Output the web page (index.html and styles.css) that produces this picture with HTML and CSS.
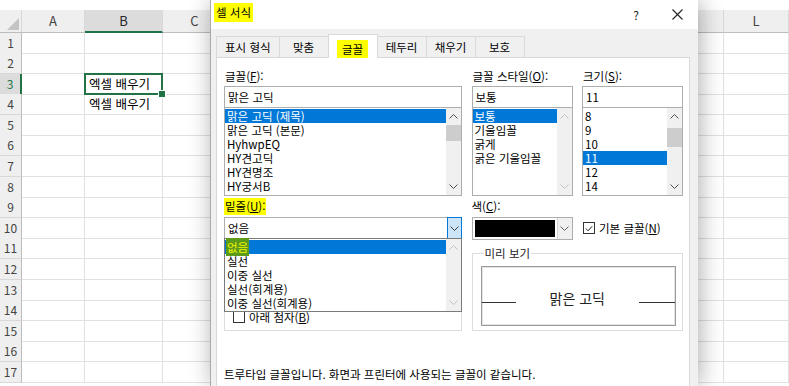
FILE: index.html
```html
<!DOCTYPE html>
<html lang="ko">
<head>
    <meta charset="UTF-8">
    <title>셀 서식</title>
    <link rel="stylesheet" href="styles.css">
</head>
<body>
    <div class="sheet">
        <div class="row head">
            <div class="corner"><svg width="12" height="12" viewBox="0 0 12 12"><polygon points="12,0 12,12 0,12" fill="#c4c4c4"/></svg></div>
            <div>A</div><div class="on">B</div><div>C</div><div></div><div></div><div>L</div>
        </div>
        <div class="row"><div class="rh">1</div><div class="cell"></div><div class="cell"></div><div class="cell"></div><div class="cell"></div><div class="cell"></div><div class="cell"></div></div>
        <div class="row"><div class="rh">2</div><div class="cell"></div><div class="cell"></div><div class="cell"></div><div class="cell"></div><div class="cell"></div><div class="cell"></div></div>
        <div class="row"><div class="rh on">3</div><div class="cell"></div><div class="cell active">엑셀 배우기</div><div class="cell"></div><div class="cell"></div><div class="cell"></div><div class="cell"></div></div>
        <div class="row"><div class="rh">4</div><div class="cell"></div><div class="cell">엑셀 배우기</div><div class="cell"></div><div class="cell"></div><div class="cell"></div><div class="cell"></div></div>
        <div class="row"><div class="rh">5</div><div class="cell"></div><div class="cell"></div><div class="cell"></div><div class="cell"></div><div class="cell"></div><div class="cell"></div></div>
        <div class="row"><div class="rh">6</div><div class="cell"></div><div class="cell"></div><div class="cell"></div><div class="cell"></div><div class="cell"></div><div class="cell"></div></div>
        <div class="row"><div class="rh">7</div><div class="cell"></div><div class="cell"></div><div class="cell"></div><div class="cell"></div><div class="cell"></div><div class="cell"></div></div>
        <div class="row"><div class="rh">8</div><div class="cell"></div><div class="cell"></div><div class="cell"></div><div class="cell"></div><div class="cell"></div><div class="cell"></div></div>
        <div class="row"><div class="rh">9</div><div class="cell"></div><div class="cell"></div><div class="cell"></div><div class="cell"></div><div class="cell"></div><div class="cell"></div></div>
        <div class="row"><div class="rh">10</div><div class="cell"></div><div class="cell"></div><div class="cell"></div><div class="cell"></div><div class="cell"></div><div class="cell"></div></div>
        <div class="row"><div class="rh">11</div><div class="cell"></div><div class="cell"></div><div class="cell"></div><div class="cell"></div><div class="cell"></div><div class="cell"></div></div>
        <div class="row"><div class="rh">12</div><div class="cell"></div><div class="cell"></div><div class="cell"></div><div class="cell"></div><div class="cell"></div><div class="cell"></div></div>
        <div class="row"><div class="rh">13</div><div class="cell"></div><div class="cell"></div><div class="cell"></div><div class="cell"></div><div class="cell"></div><div class="cell"></div></div>
        <div class="row"><div class="rh">14</div><div class="cell"></div><div class="cell"></div><div class="cell"></div><div class="cell"></div><div class="cell"></div><div class="cell"></div></div>
        <div class="row"><div class="rh">15</div><div class="cell"></div><div class="cell"></div><div class="cell"></div><div class="cell"></div><div class="cell"></div><div class="cell"></div></div>
        <div class="row"><div class="rh">16</div><div class="cell"></div><div class="cell"></div><div class="cell"></div><div class="cell"></div><div class="cell"></div><div class="cell"></div></div>
        <div class="row"><div class="rh">17</div><div class="cell"></div><div class="cell"></div><div class="cell"></div><div class="cell"></div><div class="cell"></div><div class="cell"></div></div>
    </div>

    <div class="dialog">
        <div class="titlebar">
            <span class="title mark">셀 서식</span>
            <div class="ctrls">
                <span class="ctrl">?</span>
                <span class="ctrl"><svg width="11" height="11" viewBox="0 0 11 11"><path d="M.5.5l10 10M10.5.5l-10 10" stroke="#222" stroke-width="1.1"/></svg></span>
            </div>
        </div>

        <div class="dlg-body">
            <div class="tabs">
                <div class="tab">표시 형식</div>
                <div class="tab">맞춤</div>
                <div class="tab active"><span class="mark">글꼴</span></div>
                <div class="tab">테두리</div>
                <div class="tab">채우기</div>
                <div class="tab">보호</div>
            </div>

            <div class="panel">
                <div class="font-grid">
                    <div class="lbl">글꼴(<u>F</u>):</div>
                    <div class="lbl">글꼴 스타일(<u>O</u>):</div>
                    <div class="lbl">크기(<u>S</u>):</div>

                    <div class="field">맑은 고딕</div>
                    <div class="field">보통</div>
                    <div class="field">11</div>

                    <div class="list">
                        <div class="items">
                            <div class="item on">맑은 고딕 (제목)</div>
                            <div class="item">맑은 고딕 (본문)</div>
                            <div class="item">HyhwpEQ</div>
                            <div class="item">HY견고딕</div>
                            <div class="item">HY견명조</div>
                            <div class="item">HY궁서B</div>
                        </div>
                        <div class="sb">
                            <span class="arr"><svg width="9" height="5" viewBox="0 0 9 5"><path d="M.5 4.5l4-4 4 4" fill="none" stroke="#505050"/></svg></span>
                            <span class="thumb"></span>
                            <span class="fill"></span>
                            <span class="arr"><svg width="9" height="5" viewBox="0 0 9 5"><path d="M.5.5l4 4 4-4" fill="none" stroke="#505050"/></svg></span>
                        </div>
                    </div>
                    <div class="list">
                        <div class="items">
                            <div class="item on">보통</div>
                            <div class="item">기울임꼴</div>
                            <div class="item">굵게</div>
                            <div class="item">굵은 기울임꼴</div>
                        </div>
                        <div class="sb off">
                            <span class="arr"><svg width="9" height="5" viewBox="0 0 9 5"><path d="M.5 4.5l4-4 4 4" fill="none" stroke="#c2c2c2"/></svg></span>
                            <span class="fill"></span>
                            <span class="arr"><svg width="9" height="5" viewBox="0 0 9 5"><path d="M.5.5l4 4 4-4" fill="none" stroke="#c2c2c2"/></svg></span>
                        </div>
                    </div>
                    <div class="list">
                        <div class="items">
                            <div class="item">8</div>
                            <div class="item">9</div>
                            <div class="item">10</div>
                            <div class="item on">11</div>
                            <div class="item">12</div>
                            <div class="item">14</div>
                        </div>
                        <div class="sb">
                            <span class="arr"><svg width="9" height="5" viewBox="0 0 9 5"><path d="M.5 4.5l4-4 4 4" fill="none" stroke="#505050"/></svg></span>
                            <span class="thumb low"></span>
                            <span class="fill"></span>
                            <span class="arr"><svg width="9" height="5" viewBox="0 0 9 5"><path d="M.5.5l4 4 4-4" fill="none" stroke="#505050"/></svg></span>
                        </div>
                    </div>

                    <div class="lbl2"><span class="mark">밑줄(<u>U</u>):</span></div>
                    <div class="lbl2">색(<u>C</u>):</div>
                    <div class="lbl2"></div>

                    <div class="combo-wrap">
                        <div class="combo">
                            <div class="val">없음</div>
                            <div class="btn hot"><svg width="9" height="5" viewBox="0 0 9 5"><path d="M.5.5l4 4 4-4" fill="none" stroke="#404040"/></svg></div>
                        </div>
                        <div class="droplist">
                            <div class="items">
                                <div class="item on"><span class="mark-on">없음</span></div>
                                <div class="item">실선</div>
                                <div class="item">이중 실선</div>
                                <div class="item">실선(회계용)</div>
                                <div class="item">이중 실선(회계용)</div>
                            </div>
                            <div class="sb off">
                                <span class="arr"><svg width="9" height="5" viewBox="0 0 9 5"><path d="M.5 4.5l4-4 4 4" fill="none" stroke="#c2c2c2"/></svg></span>
                                <span class="fill"></span>
                                <span class="arr"><svg width="9" height="5" viewBox="0 0 9 5"><path d="M.5.5l4 4 4-4" fill="none" stroke="#c2c2c2"/></svg></span>
                            </div>
                        </div>
                    </div>
                    <div class="combo color">
                        <div class="swatch"></div>
                        <div class="btn"><svg width="9" height="5" viewBox="0 0 9 5"><path d="M.5.5l4 4 4-4" fill="none" stroke="#606060"/></svg></div>
                    </div>
                    <div class="check-row">
                        <span class="box"><svg width="11" height="11" viewBox="0 0 11 11"><path d="M2 5.5l2.5 2.5 4.5-5" fill="none" stroke="#222" stroke-width="1.1"/></svg></span>
                        <span>기본 글꼴(<u>N</u>)</span>
                    </div>

                    <div class="effects">
                        <div class="check-row"><span class="box"></span><span>아래 첨자(<u>B</u>)</span></div>
                    </div>
                    <fieldset class="preview">
                        <legend>미리 보기</legend>
                        <div class="sample">
                            <span class="uline left"></span>
                            <span class="sample-text">맑은 고딕</span>
                            <span class="uline right"></span>
                        </div>
                    </fieldset>
                </div>

                <p class="note">트루타입 글꼴입니다. 화면과 프린터에 사용되는 글꼴이 같습니다.</p>
            </div>
        </div>
    </div>
</body>
</html>
```

FILE: styles.css
```css
* {
    box-sizing: border-box;
}
body {
    margin: 0;
    width: 789px;
    height: 386px;
    overflow: hidden;
    position: relative;
    background: #fff;
    color: #000;
    font-family: "Noto Sans CJK KR", "Noto Sans", sans-serif;
}

/* sheet behind the dialog */
.sheet {
    padding-top: 10px;
}
.row {
    display: grid;
    grid-template-columns: 22px 63px 78px 64px 470px 27px 65px;
    height: 20.6px;
}
.row.head {
    height: 22.5px;
}
.head > div {
    background: #efefef;
    border-right: 1px solid #d8d8d8;
    border-bottom: 1px solid #bcbcbc;
    color: #444;
    font-size: 13px;
    line-height: 21px;
    text-align: center;
}
.head > div.on {
    background: #dcdcdc;
    border-bottom: 2px solid #217346;
    color: #262626;
}
.head .corner {
    display: flex;
    align-items: flex-end;
    justify-content: flex-end;
    padding: 0 2px 2px 0;
}
.rh {
    background: #efefef;
    border-right: 1px solid #bcbcbc;
    border-bottom: 1px solid #d8d8d8;
    color: #444;
    font-size: 12px;
    line-height: 20px;
    text-align: center;
}
.rh.on {
    background: #dcdcdc;
    border-right: 2px solid #217346;
    color: #217346;
}
.cell {
    border-right: 1px solid #e1e1e1;
    border-bottom: 1px solid #e1e1e1;
    padding-left: 4px;
    font-size: 12.5px;
    line-height: 19px;
    white-space: nowrap;
}
.cell.active {
    position: relative;
}
.cell.active::after {
    content: "";
    position: absolute;
    left: -1px;
    top: -1px;
    right: -1px;
    bottom: -1px;
    border: 2px solid #217346;
}
.cell.active::before {
    content: "";
    position: absolute;
    right: -4px;
    bottom: -4px;
    width: 6px;
    height: 6px;
    background: #217346;
    border: 1px solid #fff;
    z-index: 1;
}

/* dialog */
.dialog {
    position: absolute;
    left: 210px;
    top: 0;
    width: 488px;
    height: 386px;
    overflow: hidden;
    background: #f0f0f0;
    border-left: 1px solid #aaa;
    box-shadow: 2px 0 22px rgba(0,0,0,0.32);
    font-size: 11.5px;
    z-index: 5;
}
.mark {
    background: #ffff00;
}
.titlebar {
    height: 29px;
    background: #fff;
    display: flex;
    align-items: flex-start;
}
.title {
    margin: 3px 0 0 3px;
    padding: 0 2px;
    line-height: 19px;
    font-size: 11.5px;
}
.ctrls {
    margin-left: auto;
    margin-right: 6px;
    height: 29px;
    display: flex;
    align-items: center;
    gap: 11px;
}
.ctrl {
    width: 30px;
    display: flex;
    justify-content: center;
    font-size: 12px;
    color: #222;
}
.dlg-body {
    padding: 5px 8px 0 5px;
}
.tabs {
    display: flex;
    align-items: flex-end;
    height: 23px;
}
.tab {
    min-width: 50px;
    height: 21px;
    padding: 0 8px;
    border: 1px solid #d9d9d9;
    border-bottom: 0;
    line-height: 20px;
    text-align: center;
    white-space: nowrap;
}
.tab + .tab {
    margin-left: -1px;
}
.tab.active {
    position: relative;
    z-index: 1;
    height: 24px;
    margin-bottom: -1px;
    padding: 4px 5px 0;
    background: #fff;
}
.tab.active .mark {
    display: inline-block;
    padding: 0 5px;
    line-height: 18px;
}
.panel {
    height: 360px;
    background: #fff;
    border: 1px solid #d9d9d9;
    padding: 9px 7px 0 7px;
}
.font-grid {
    display: grid;
    grid-template-columns: 238px 101px 101px;
    column-gap: 9.5px;
}
.lbl {
    height: 19px;
    line-height: 18px;
    padding-left: 1px;
    white-space: nowrap;
}
.field {
    height: 22px;
    border: 1px solid #adadad;
    padding-left: 3px;
    line-height: 20px;
}
.list {
    height: 89px;
    margin-top: -1px;
    border: 1px solid #adadad;
    display: flex;
    overflow: hidden;
}
.items {
    flex: 1;
    padding-top: 1px;
}
.item {
    height: 14px;
    line-height: 14px;
    padding-left: 2px;
    white-space: nowrap;
}
.item.on {
    background: #0078d7;
    color: #fff;
}
.sb {
    width: 15px;
    background: #f0f0f0;
    display: flex;
    flex-direction: column;
    align-items: center;
}
.sb .arr {
    height: 17px;
    display: flex;
    align-items: center;
}
.sb .thumb {
    width: 15px;
    height: 16px;
    background: #cdcdcd;
}
.sb .thumb.low {
    margin-top: 3px;
    height: 19px;
}
.sb .fill {
    flex: 1;
}
.lbl2 {
    height: 21px;
    padding: 2px 0 0 0;
    line-height: 17px;
}
.lbl2 .mark {
    display: inline-block;
    padding: 0 1px;
}
.combo-wrap {
    position: relative;
}
.combo {
    display: flex;
    height: 22px;
    border: 1px solid #adadad;
}
.combo .val {
    flex: 1;
    padding-left: 3px;
    line-height: 20px;
}
.combo .btn {
    width: 15px;
    display: flex;
    align-items: center;
    justify-content: center;
    background: #f0f0f0;
    border-left: 1px solid #d4d4d4;
}
.combo .btn.hot {
    margin: -1px -1px -1px 0;
    background: #cce4f7;
    border: 1px solid #0078d7;
}
.combo.color {
    height: 23px;
}
.swatch {
    flex: 1;
    margin: 2px;
    background: #000;
}
.droplist {
    position: absolute;
    left: 0;
    right: 0;
    top: 21px;
    height: 74px;
    background: #fff;
    border: 1px solid #7a7a7a;
    display: flex;
    z-index: 2;
}
.mark-on {
    display: inline-block;
    margin: -2px 0 0 -1px;
    padding: 0 1px;
    line-height: 18px;
    background: #5c9a1a;
    color: #f0f400;
}
.check-row {
    display: flex;
    align-items: center;
    gap: 4px;
    white-space: nowrap;
}
.check-row .box {
    width: 12px;
    height: 12px;
    border: 1px solid #333;
    background: #fff;
    display: flex;
    align-items: center;
    justify-content: center;
}
.font-grid > .check-row {
    padding-left: 1px;
    height: 22px;
}
.effects {
    height: 85px;
    margin-top: 6px;
    padding: 0 8px 3px;
    border: 1px solid #dcdcdc;
    display: flex;
    flex-direction: column;
    justify-content: flex-end;
}
.effects .check-row {
    height: 20px;
}
.preview {
    grid-column: 2 / 4;
    height: 85px;
    margin: 6px 0 0;
    padding: 0 6px 0 8px;
    border: 1px solid #dcdcdc;
    min-width: 0;
}
.preview legend {
    margin-left: 3px;
    padding: 0 1px;
    line-height: 14px;
    color: #222;
}
.sample {
    height: 60px;
    margin-top: 6px;
    border: 1px solid #9a9a9a;
    box-shadow: inset 0 0 0 1px #e4e4e4;
    display: flex;
    align-items: center;
}
.uline {
    height: 1px;
    margin-top: 12px;
    background: #333;
}
.uline.left {
    width: 34px;
}
.uline.right {
    width: 36px;
}
.sample-text {
    flex: 1;
    margin-top: 4px;
    text-align: center;
    font-size: 14px;
    color: #222;
}
.note {
    margin: 35px 0 0;
    line-height: 16px;
    white-space: nowrap;
}
```
